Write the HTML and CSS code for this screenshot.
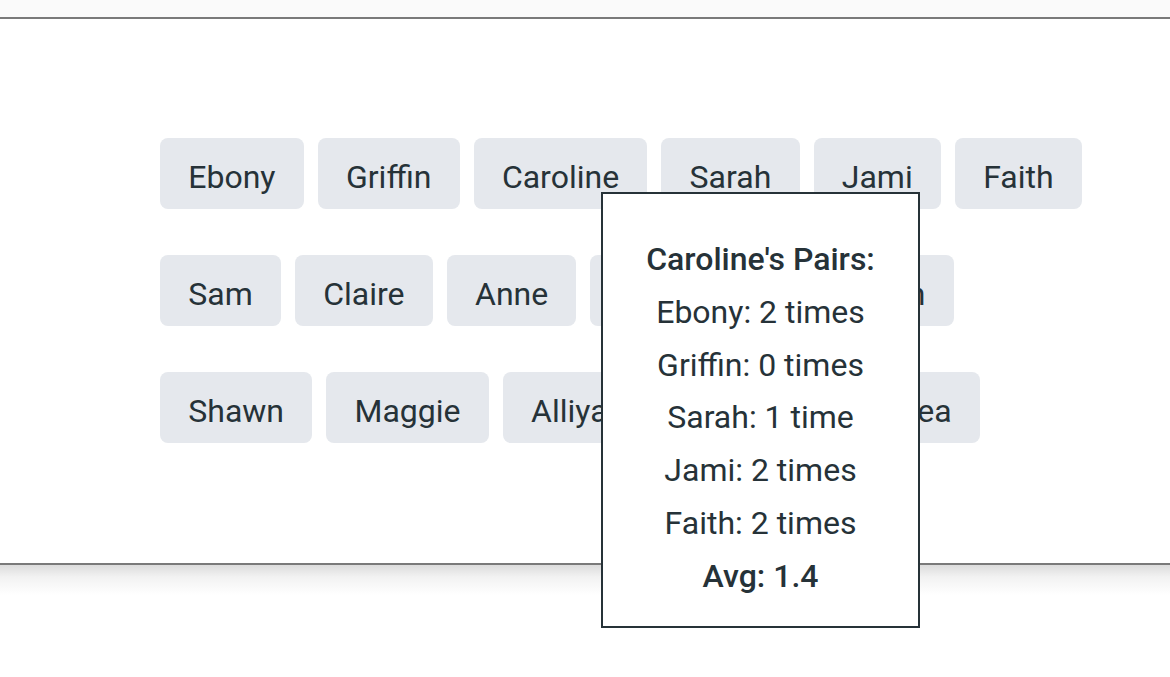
FILE: index.html
```html
<!DOCTYPE html>
<html lang="en">
<head>
<meta charset="utf-8">
<title>Pairs</title>
<link rel="stylesheet" href="styles.css">
</head>
<body>
<div class="topbar"></div>
<section class="board">
  <div class="chips">
    <div class="chip">Ebony</div>
    <div class="chip">Griffin</div>
    <div class="chip">Caroline</div>
    <div class="chip">Sarah</div>
    <div class="chip">Jami</div>
    <div class="chip">Faith</div>
    <div class="chip">Sam</div>
    <div class="chip">Claire</div>
    <div class="chip">Anne</div>
    <div class="chip">Stephanie</div>
    <div class="chip">Darren</div>
    <div class="chip">Shawn</div>
    <div class="chip">Maggie</div>
    <div class="chip">Alliyah</div>
    <div class="chip">Marissa</div>
    <div class="chip">Thea</div>
  </div>
</section>
<div class="board-shadow"></div>
<div class="tooltip">
  <div class="tip-title">Caroline's Pairs:</div>
  <div>Ebony: 2 times</div>
  <div>Griffin: 0 times</div>
  <div>Sarah: 1 time</div>
  <div>Jami: 2 times</div>
  <div>Faith: 2 times</div>
  <div class="tip-avg">Avg: 1.4</div>
</div>
</body>
</html>
```

FILE: styles.css
```css
html, body {
  margin: 0;
  padding: 0;
  background: #ffffff;
  font-family: Roboto, "Liberation Sans", sans-serif;
  color: #263238;
}

.topbar {
  height: 17px;
  background: #fafafa;
}

.board {
  border-top: 2px solid #7a7a7a;
  border-bottom: 2px solid #7a7a7a;
  background: #ffffff;
  padding: 119px 70px 120px 160px;
}

.board-shadow {
  height: 30px;
  background: linear-gradient(to bottom, #dcdcdc 0%, #f2f2f2 40%, #ffffff 100%);
}

.chips {
  display: flex;
  flex-wrap: wrap;
  column-gap: 14px;
  row-gap: 46px;
}

.chip {
  background: #e5e8ed;
  border-radius: 8px;
  font-size: 32px;
  line-height: 47px;
  padding: 16px 28.25px 8px;
  color: #263238;
}

.tooltip {
  position: absolute;
  left: 601px;
  top: 192px;
  width: 319px;
  box-sizing: border-box;
  border: 2px solid #263238;
  background: #ffffff;
  padding: 39px 0 23px;
  text-align: center;
  font-size: 32px;
  line-height: 52.8px;
  color: #263238;
  z-index: 10;
}

.tip-title,
.tip-avg {
  font-weight: 500;
}
```
